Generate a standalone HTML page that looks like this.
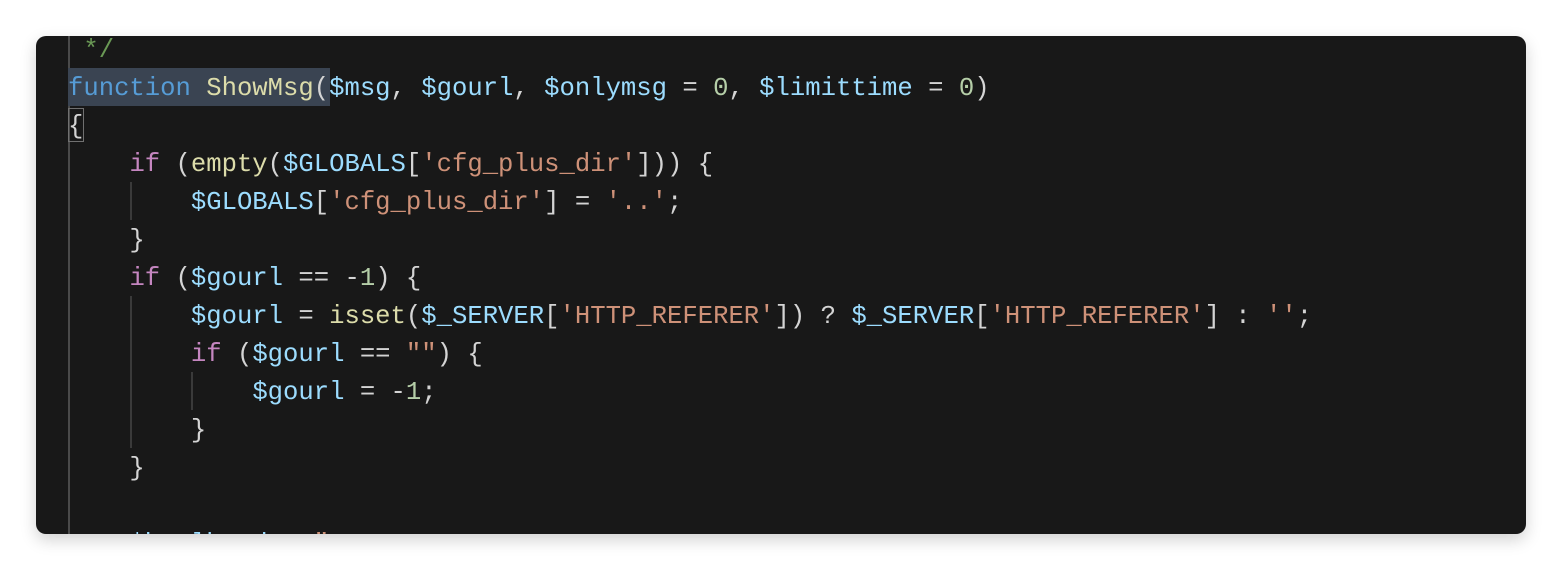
<!DOCTYPE html>
<html><head><meta charset="utf-8"><style>
html,body{margin:0;padding:0;background:#fff;width:1562px;height:570px;overflow:hidden}
.card{position:absolute;left:36px;top:36px;width:1490px;height:498px;background:#181818;border-radius:10px;overflow:hidden;box-shadow:0 6px 16px rgba(0,0,0,0.18)}
.code{position:absolute;left:32px;top:-4px;font-family:"Liberation Mono","DejaVu Sans Mono",monospace;font-size:25.6px;line-height:38px;color:#d4d4d4;white-space:pre}
.g{position:absolute;width:2px;background:#3a3a3a}
.k{color:#569cd6}.f{color:#dcdcaa}.v{color:#9cdcfe}.s{color:#ce9178}.c{color:#c586c0}.n{color:#b5cea8}.m{color:#6a9955}
.sel{position:absolute;left:32px;top:32px;width:262px;height:38px;background:#3a4452}
.br{position:absolute;left:32px;top:72px;width:16px;height:34px;border:1px solid #707070;box-sizing:border-box}
</style></head><body>
<div class="card">
<div class="g" style="left:32px;top:0;height:498px;background:#4a4a4a"></div>
<div class="sel"></div>
<div class="br"></div>
<div class="g" style="left:94px;top:146px;height:38px"></div>
<div class="g" style="left:94px;top:260px;height:152px"></div>
<div class="g" style="left:155px;top:336px;height:38px"></div>
<div class="code"><span class="m"> */</span>
<span class="k">function</span> <span class="f">ShowMsg</span>(<span class="v">$msg</span>, <span class="v">$gourl</span>, <span class="v">$onlymsg</span> = <span class="n">0</span>, <span class="v">$limittime</span> = <span class="n">0</span>)
{
    <span class="c">if</span> (<span class="f">empty</span>(<span class="v">$GLOBALS</span>[<span class="s">'cfg_plus_dir'</span>])) {
        <span class="v">$GLOBALS</span>[<span class="s">'cfg_plus_dir'</span>] = <span class="s">'..'</span>;
    }
    <span class="c">if</span> (<span class="v">$gourl</span> == -<span class="n">1</span>) {
        <span class="v">$gourl</span> = <span class="f">isset</span>(<span class="v">$_SERVER</span>[<span class="s">'HTTP_REFERER'</span>]) ? <span class="v">$_SERVER</span>[<span class="s">'HTTP_REFERER'</span>] : <span class="s">''</span>;
        <span class="c">if</span> (<span class="v">$gourl</span> == <span class="s">""</span>) {
            <span class="v">$gourl</span> = -<span class="n">1</span>;
        }
    }

    <span class="v">$htmlhead</span> = <span class="s">"</span></div>
</div>
</body></html>
